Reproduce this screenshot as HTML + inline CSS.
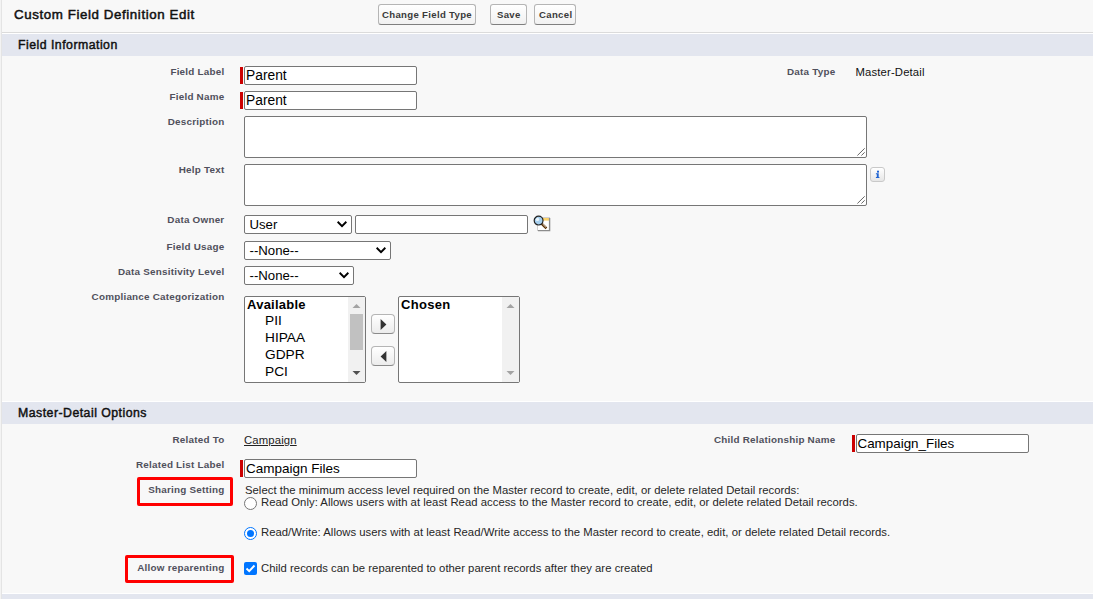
<!DOCTYPE html>
<html><head><meta charset="utf-8">
<style>
*{box-sizing:border-box;margin:0;padding:0}
html,body{width:1093px;height:599px;overflow:hidden;background:#f8f8f8;font-family:"Liberation Sans",sans-serif;color:#000}
.a{position:absolute;white-space:nowrap;line-height:1}
.edge{position:absolute;left:0;top:0;width:1px;height:599px;background:#f3f3f3}
.edge2{position:absolute;left:1px;top:0;width:1px;height:599px;background:#e4e4e4}
.title{left:14px;letter-spacing:0.6px;font-size:13.3px;font-weight:normal;-webkit-text-stroke:0.5px #111;color:#111}
.btn{position:absolute;height:21px;top:4px;border:1px solid #b5b5b5;border-bottom-color:#7f7f7f;border-radius:3px;background:linear-gradient(#fff,#f1f1f1);font-size:10px;font-weight:bold;color:#3a3a3a}
.btn span{position:absolute;top:5px;line-height:1;font-size:9.6px;letter-spacing:0.32px}
.hline{position:absolute;left:2px;right:0;height:1px;background:#dbdbdb}
.band{position:absolute;left:2px;right:0;background:#e3e6ef;border-top:1px solid #fff}
.sec{left:18px;letter-spacing:0.48px;font-size:12.3px;font-weight:normal;-webkit-text-stroke:0.45px #111;color:#111}
.lbl{position:absolute;margin-top:1px;letter-spacing:0.22px;text-align:right;font-size:9.9px;font-weight:bold;color:#50505c;line-height:1;white-space:nowrap}
.inp{position:absolute;background:#fff;border:1px solid #767676;border-radius:2px}
.req{position:absolute;width:3px;background:#c00}
.itxt{font-size:13.8px;color:#000}
.val{font-size:11.3px;letter-spacing:0.15px;color:#111}
.chev{position:absolute}
.txt{font-size:11.3px;letter-spacing:0.028px;color:#262626}
</style></head><body>
<div class="edge"></div><div class="edge2"></div>

<div class="a title" style="top:8px">Custom Field Definition Edit</div>
<div class="btn" style="left:378px;width:98px"><span style="left:3px">Change Field Type</span></div>
<div class="btn" style="left:490px;width:37px"><span style="left:6px">Save</span></div>
<div class="btn" style="left:534px;width:42px"><span style="left:4px">Cancel</span></div>

<div class="hline" style="top:32px"></div>
<div class="band" style="top:33px;height:23px"></div>
<div class="a sec" style="top:39px">Field Information</div>

<div class="lbl" style="right:868.6px;top:66px">Field Label</div>
<div class="req" style="left:240px;top:67px;height:17px"></div>
<div class="inp" style="left:244px;top:66px;width:173px;height:19px"></div>
<div class="a itxt" style="left:246px;top:69px">Parent</div>

<div class="lbl" style="right:257.6px;top:66px">Data Type</div>
<div class="a val" style="left:855.5px;top:67px">Master-Detail</div>

<div class="lbl" style="right:868.6px;top:91px">Field Name</div>
<div class="req" style="left:240px;top:92px;height:17px"></div>
<div class="inp" style="left:244px;top:91px;width:173px;height:19px"></div>
<div class="a itxt" style="left:246px;top:94px">Parent</div>

<div class="lbl" style="right:868.6px;top:116px">Description</div>
<div class="inp" style="left:244px;top:116px;width:623px;height:42px"></div>

<div class="lbl" style="right:868.6px;top:164px">Help Text</div>
<div class="inp" style="left:244px;top:164px;width:623px;height:42px"></div>

<div class="lbl" style="right:868.6px;top:214px">Data Owner</div>
<div class="inp" style="left:244px;top:215px;width:108px;height:19px"></div>
<div class="inp" style="left:355px;top:215px;width:173px;height:19px"></div>

<div class="lbl" style="right:868.6px;top:241px">Field Usage</div>
<div class="inp" style="left:244px;top:241px;width:147px;height:19px"></div>

<div class="lbl" style="right:868.6px;top:266px">Data Sensitivity Level</div>
<div class="inp" style="left:244px;top:266px;width:110px;height:19px"></div>

<div class="lbl" style="right:868.6px;top:291px">Compliance Categorization</div>
<div class="inp" style="left:244px;top:296px;width:122px;height:87px"></div>
<div class="inp" style="left:398px;top:296px;width:122px;height:87px"></div>

<div class="band" style="top:401px;height:23px"></div>
<div class="a sec" style="top:407px">Master-Detail Options</div>

<div class="lbl" style="right:868.6px;top:434px">Related To</div>
<div class="lbl" style="right:257.6px;top:434px">Child Relationship Name</div>
<div class="req" style="left:852px;top:435px;height:17px"></div>
<div class="inp" style="left:856px;top:434px;width:173px;height:19px"></div>

<div class="lbl" style="right:868.6px;top:459px">Related List Label</div>
<div class="req" style="left:240px;top:460px;height:17px"></div>
<div class="inp" style="left:244px;top:459px;width:173px;height:19px"></div>

<div class="lbl" style="right:868.6px;top:483.5px">Sharing Setting</div>
<div class="lbl" style="right:868.6px;top:561.5px">Allow reparenting</div>


<!-- selects -->
<div class="a itxt" style="left:249.5px;top:218px;font-size:13.2px">User</div>
<svg class="chev" style="left:337px;top:221px" width="10" height="7" viewBox="0 0 10 7"><path d="M0.6 0.8 L5 5.2 L9.4 0.8" fill="none" stroke="#000" stroke-width="2"/></svg>
<div class="a itxt" style="left:249.5px;top:244px;font-size:13.2px">--None--</div>
<svg class="chev" style="left:376px;top:247px" width="10" height="7" viewBox="0 0 10 7"><path d="M0.6 0.8 L5 5.2 L9.4 0.8" fill="none" stroke="#000" stroke-width="2"/></svg>
<div class="a itxt" style="left:249.5px;top:269px;font-size:13.2px">--None--</div>
<svg class="chev" style="left:339px;top:272px" width="10" height="7" viewBox="0 0 10 7"><path d="M0.6 0.8 L5 5.2 L9.4 0.8" fill="none" stroke="#000" stroke-width="2"/></svg>

<!-- textarea grips -->
<svg class="chev" style="left:855px;top:146px" width="10" height="10" viewBox="0 0 10 10"><path d="M2.4 9.5 L9.7 2.3 M6.4 9.5 L9.7 6.3" stroke="#555" stroke-width="0.9" fill="none"/></svg>
<svg class="chev" style="left:855px;top:194px" width="10" height="10" viewBox="0 0 10 10"><path d="M2.4 9.5 L9.7 2.3 M6.4 9.5 L9.7 6.3" stroke="#555" stroke-width="0.9" fill="none"/></svg>
<!-- info icon -->
<div style="position:absolute;left:870px;top:167px;width:15px;height:15px;border:1px solid #c9c9c9;border-radius:3px;background:linear-gradient(#fff,#e6e6e6)"></div>
<svg class="chev" style="left:875px;top:170px" width="5" height="9" viewBox="0 0 5 9"><rect x="2" y="0.7" width="2" height="1.9" fill="#1f63d2"/><path d="M0.9 3.3 H3.7 V7 H4.4 V8.1 H0.9 V7 H1.8 V4.3 H0.9 Z" fill="#1f63d2"/></svg>
<!-- lookup icon -->
<svg class="chev" style="left:533px;top:215px" width="19" height="17" viewBox="0 0 19 17">
<rect x="4.5" y="2.5" width="12" height="13" fill="#fff" stroke="#d0d0d0"/>
<rect x="5" y="3" width="11" height="2.6" fill="#fbd26b"/>
<path d="M5 15.6 H16.6 V3" stroke="#8c8c8c" stroke-width="1.4" fill="none"/>
<line x1="8.6" y1="8.6" x2="13.4" y2="13.4" stroke="#5a3000" stroke-width="2.4"/>
<line x1="9.4" y1="8.8" x2="13" y2="12.4" stroke="#fff" stroke-width="0.8"/>
<circle cx="5.6" cy="5.6" r="4.4" fill="#a6cfee" stroke="#222" stroke-width="1.2"/>
<circle cx="4.5" cy="4.4" r="1.7" fill="#e8f4fc"/>
</svg>
<!-- listbox contents -->
<div class="a" style="left:247px;top:298px;font-size:13px;font-weight:bold;letter-spacing:0.25px">Available</div>
<div class="a itxt" style="left:265px;top:314px;font-size:13.7px">PII</div>
<div class="a itxt" style="left:265px;top:331px;font-size:13.7px">HIPAA</div>
<div class="a itxt" style="left:265px;top:348px;font-size:13.7px">GDPR</div>
<div class="a itxt" style="left:265px;top:365px;font-size:13.7px">PCI</div>
<div style="position:absolute;left:348px;top:297px;width:17px;height:85px;background:#f1f1f1"></div>
<div style="position:absolute;left:350px;top:314px;width:13px;height:36px;background:#c1c1c1"></div>
<svg class="chev" style="left:352px;top:303px" width="9" height="6"><path d="M0.5 5 L4.5 1 L8.5 5 Z" fill="#a3a3a3"/></svg>
<svg class="chev" style="left:352px;top:370px" width="9" height="6"><path d="M0.5 1 L4.5 5 L8.5 1 Z" fill="#505050"/></svg>
<div class="a" style="left:401px;top:298px;font-size:13px;font-weight:bold;letter-spacing:0.3px">Chosen</div>
<div style="position:absolute;left:502px;top:297px;width:17px;height:85px;background:#f1f1f1"></div>
<svg class="chev" style="left:506px;top:303px" width="9" height="6"><path d="M0.5 5 L4.5 1 L8.5 5 Z" fill="#a3a3a3"/></svg>
<svg class="chev" style="left:506px;top:370px" width="9" height="6"><path d="M0.5 1 L4.5 5 L8.5 1 Z" fill="#a3a3a3"/></svg>
<!-- arrow buttons -->
<div style="position:absolute;left:371px;top:314px;width:24px;height:20px;border:1px solid #b5b5b5;border-bottom-color:#8a8a8a;border-radius:4px;background:linear-gradient(#fff,#ececec)"></div>
<svg class="chev" style="left:380px;top:319px" width="7" height="11"><path d="M0.6 0 L6.4 5.5 L0.6 11 Z" fill="#333"/></svg>
<div style="position:absolute;left:371px;top:346px;width:24px;height:20px;border:1px solid #b5b5b5;border-bottom-color:#8a8a8a;border-radius:4px;background:linear-gradient(#fff,#ececec)"></div>
<svg class="chev" style="left:380px;top:351px" width="7" height="11"><path d="M6.4 0 L0.6 5.5 L6.4 11 Z" fill="#333"/></svg>
<!-- master detail -->
<div class="a val" style="left:244px;top:435px;text-decoration:underline;color:#222">Campaign</div>
<div class="a itxt" style="left:857.5px;top:437px;font-size:13.4px">Campaign_Files</div>
<div class="a itxt" style="left:246px;top:462px;font-size:13.5px">Campaign Files</div>
<div class="a txt" style="left:245px;top:485px">Select the minimum access level required on the Master record to create, edit, or delete related Detail records:</div>
<div style="position:absolute;left:244px;top:497px;width:13px;height:13px;border:1px solid #767676;border-radius:50%;background:#fff"></div>
<div class="a txt" style="left:261px;top:497px">Read Only: Allows users with at least Read access to the Master record to create, edit, or delete related Detail records.</div>
<div style="position:absolute;left:244px;top:527px;width:13px;height:13px;border:1px solid #0075ff;border-radius:50%;background:#fff"></div>
<div style="position:absolute;left:247px;top:530px;width:7px;height:7px;border-radius:50%;background:#0075ff"></div>
<div class="a txt" style="left:261px;top:527px">Read/Write: Allows users with at least Read/Write access to the Master record to create, edit, or delete related Detail records.</div>
<div style="position:absolute;left:244px;top:562px;width:13px;height:13px;border-radius:2px;background:#0075ff"></div>
<svg class="chev" style="left:244px;top:562px" width="13" height="13"><path d="M2.5 6.5 L5.2 9.2 L10.5 3.5" stroke="#fff" stroke-width="1.9" fill="none"/></svg>
<div class="a txt" style="left:261px;top:563px">Child records can be reparented to other parent records after they are created</div>
<!-- red boxes -->
<div style="position:absolute;left:137px;top:477px;width:96px;height:29px;border:3px solid #f00;border-radius:2px"></div>
<div style="position:absolute;left:125px;top:555px;width:109px;height:28px;border:3px solid #f00;border-radius:2px"></div>
<div class="band" style="top:593px;height:10px"></div>
</body></html>
